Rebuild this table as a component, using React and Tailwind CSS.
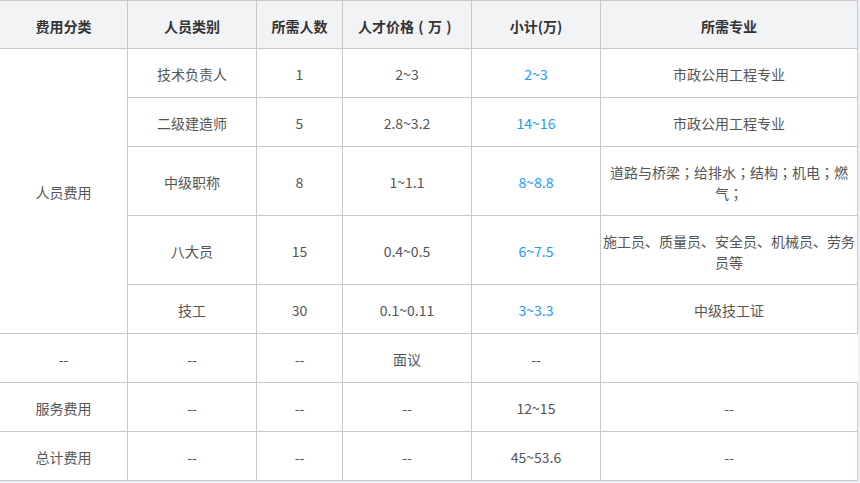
import React from "react";

const blue = "text-[#1e9bf5]";

function Cell({ children, className = "" }) {
  return (
    <div
      className={
        "flex items-center justify-center text-center border-r border-b border-[#c9c9c9] px-[2px] pt-[3px] " +
        className
      }
    >
      <div>{children}</div>
    </div>
  );
}

function Head({ children }) {
  return (
    <div className="flex items-center justify-center text-center border-t border-r border-b border-[#c9c9c9] bg-[#f2f3f5] font-bold text-[#333] pt-[3px]">
      <div>{children}</div>
    </div>
  );
}

const Semi = () => (
  <span style={{ fontFamily: '"Noto Sans CJK TC", sans-serif' }}>；</span>
);

const Paren = ({ c }) => (
  <span className="inline-block w-[14px] text-center">{c}</span>
);

export default function App() {
  const rows = [
    ["技术负责人", "1", "2~3", "2~3", "市政公用工程专业"],
    ["二级建造师", "5", "2.8~3.2", "14~16", "市政公用工程专业"],
    [
      "中级职称",
      "8",
      "1~1.1",
      "8~8.8",
      <>
        道路与桥梁<Semi />给排水<Semi />结构<Semi />机电<Semi />燃气<Semi />
      </>,
    ],
    ["八大员", "15", "0.4~0.5", "6~7.5", "施工员、质量员、安全员、机械员、劳务员等"],
    ["技工", "30", "0.1~0.11", "3~3.3", "中级技工证"],
  ];
  return (
    <div
      className="w-[860px] h-[483px] bg-[#edf1f5] overflow-hidden text-[14px] leading-[21px] text-[#555]"
      style={{ fontFamily: '"Noto Sans CJK SC", "Noto Sans", sans-serif' }}
    >
      <div className="grid w-[858px] bg-white grid-cols-[128px_129px_86px_129px_129px_257px] grid-rows-[49px_49px_49px_69px_69px_49px_49px_49px_49px]">
        <Head>费用分类</Head>
        <Head>人员类别</Head>
        <Head>所需人数</Head>
        <Head>
          人才价格<Paren c="(" />万<Paren c=")" />
        </Head>
        <Head>小计(万)</Head>
        <Head>所需专业</Head>

        <Cell className="row-span-5">人员费用</Cell>
        {rows.map((r, i) => (
          <React.Fragment key={i}>
            <Cell>{r[0]}</Cell>
            <Cell>{r[1]}</Cell>
            <Cell>{r[2]}</Cell>
            <Cell className={blue}>{r[3]}</Cell>
            <Cell>{r[4]}</Cell>
          </React.Fragment>
        ))}

        <Cell>--</Cell>
        <Cell>--</Cell>
        <Cell>--</Cell>
        <Cell>面议</Cell>
        <Cell>--</Cell>
        <div className="border-b border-[#c9c9c9]"></div>

        <Cell>服务费用</Cell>
        <Cell>--</Cell>
        <Cell>--</Cell>
        <Cell>--</Cell>
        <Cell>12~15</Cell>
        <Cell>--</Cell>

        <Cell>总计费用</Cell>
        <Cell>--</Cell>
        <Cell>--</Cell>
        <Cell>--</Cell>
        <Cell>45~53.6</Cell>
        <Cell>--</Cell>
      </div>
    </div>
  );
}
